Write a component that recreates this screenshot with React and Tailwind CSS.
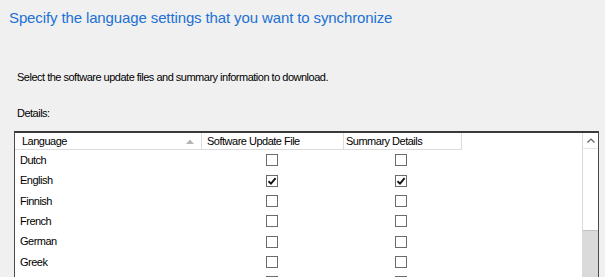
import React from 'react';

const rows = [
  { name: 'Dutch', file: false, summary: false },
  { name: 'English', file: true, summary: true },
  { name: 'Finnish', file: false, summary: false },
  { name: 'French', file: false, summary: false },
  { name: 'German', file: false, summary: false },
  { name: 'Greek', file: false, summary: false },
  { name: '', file: false, summary: false },
];

const Check = ({ checked }) => (
  <div className="h-[12px] w-[12px] border border-[#6b6b6b] bg-white flex items-center justify-center">
    {checked && (
      <svg width="10" height="10" viewBox="0 0 10 10">
        <path d="M1.5 5.2 L4 7.6 L8.6 2.2" fill="none" stroke="#111" strokeWidth="1.9" />
      </svg>
    )}
  </div>
);

export default function App() {
  return (
    <div className="h-[277px] w-[605px] overflow-hidden bg-[#f0f0f0] font-['Liberation_Sans',Arial,sans-serif] text-black">
      {/* Titel */}
      <h1 className="pl-[9px] pt-[8px] text-[15px] leading-[20px] tracking-[-0.12px] text-[#2170d4]">
        Specify the language settings that you want to synchronize
      </h1>

      <div className="pl-[17px] text-[11px] leading-[14px] tracking-[-0.5px]">
        <p className="mt-[42px]">Select the software update files and summary information to download.</p>
        <p className="mt-[22px]">Details:</p>
      </div>

      {/* Liste */}
      <div className="ml-[14px] mr-[6px] mt-[11px] flex h-[200px] border border-[#4a4a4a] border-t-2 border-t-[#3a3a3a] bg-white">
        <div className="flex-1 text-[11px] tracking-[-0.5px]">
          <div className="flex h-[17px]">
            <div className="flex w-[187px] items-center justify-between border-b border-r border-[#dcdcdc] pl-[7px] pr-[7px]">
              <span>Language</span>
              <svg width="8" height="5" viewBox="0 0 8 5">
                <path d="M0 5 L4 0.5 L8 5 Z" fill="#b4b4b4" />
              </svg>
            </div>
            <div className="flex w-[142px] items-center border-b border-r border-[#dcdcdc] pl-[5px]">
              Software Update File
            </div>
            <div className="flex w-[118px] items-center border-b border-r border-[#dcdcdc] pl-[2px]">
              Summary Details
            </div>
          </div>
          {rows.map((r, i) => (
            <div key={i} className="flex h-[20.35px] items-center">
              <div className="w-[187px] pl-[5px]">{r.name}</div>
              <div className="w-[142px] pl-[64px]">
                <Check checked={r.file} />
              </div>
              <div className="w-[118px] pl-[51px]">
                <Check checked={r.summary} />
              </div>
            </div>
          ))}
        </div>

        {/* Scrollbalken */}
        <div className="flex w-[16px] flex-col border-l border-[#dadada] bg-white">
          <div className="flex h-[16px] items-center justify-center border-b border-[#e6e6e6]">
            <svg width="8" height="5" viewBox="0 0 8 5">
              <path d="M0.5 4.5 L4 1 L7.5 4.5" fill="none" stroke="#606060" strokeWidth="1.2" />
            </svg>
          </div>
          <div className="h-[81px]" />
          <div className="flex-1 border-t border-[#c2c2c2] bg-[#dadada]" />
        </div>
      </div>
    </div>
  );
}
